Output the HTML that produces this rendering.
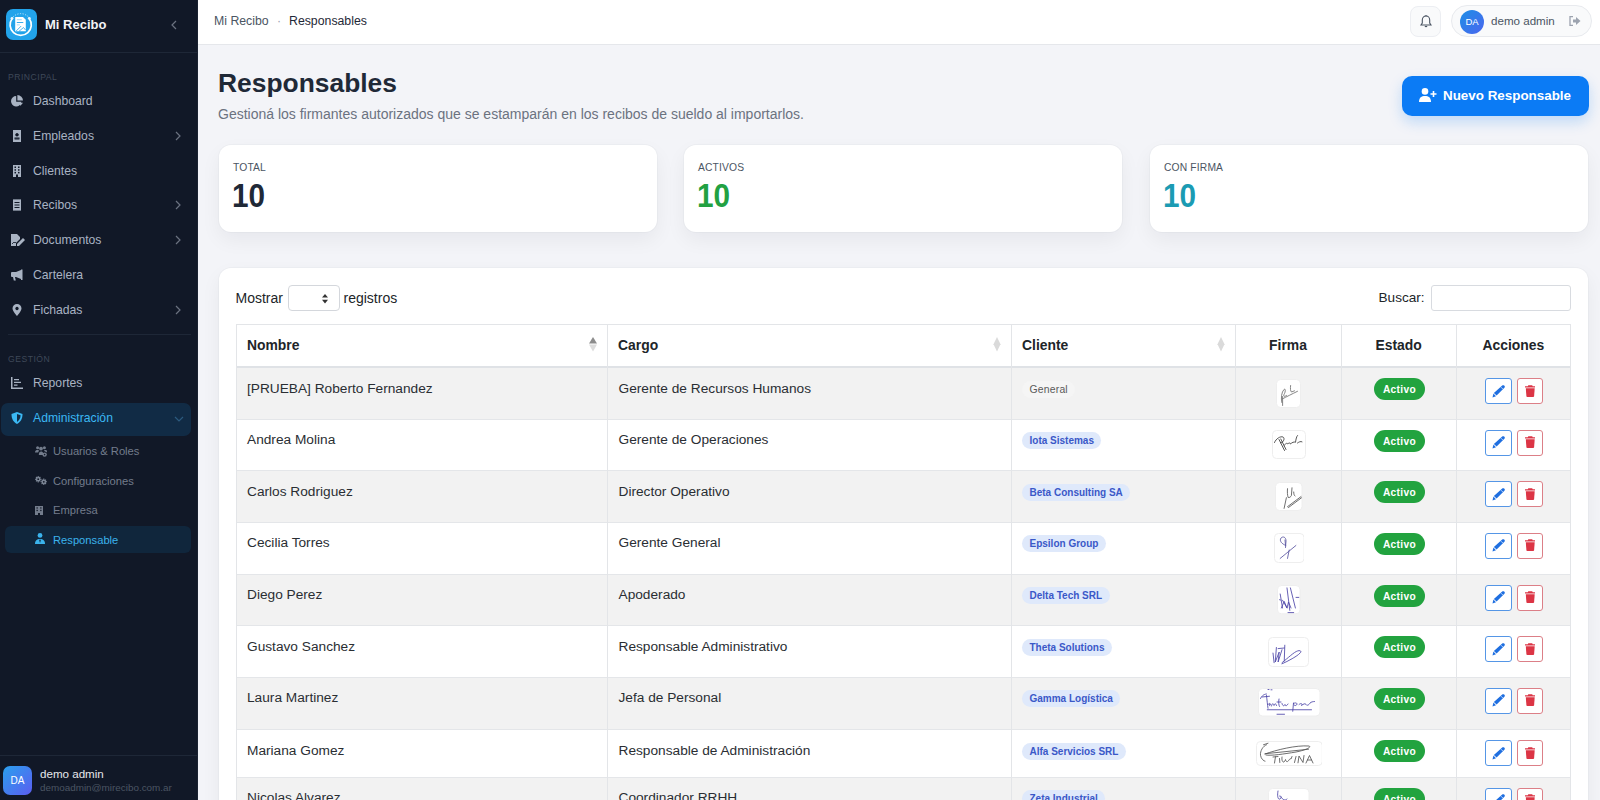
<!DOCTYPE html>
<html><head><meta charset="utf-8">
<style>
*{box-sizing:border-box;margin:0;padding:0}
html,body{width:1600px;height:800px;overflow:hidden;font-family:"Liberation Sans",sans-serif;background:#f3f4f8;color:#1f2937}
.abs{position:absolute}
#sb{position:absolute;left:0;top:0;width:198px;height:800px;background:#111827;border-right:1px solid #1a2231}
#sb .logo{position:absolute;left:6px;top:9px;width:31px;height:31px;border-radius:7px;background:#22a3ea}
#sb .brand{position:absolute;left:45px;top:17px;font-size:13px;font-weight:bold;color:#f3f4f6;line-height:16px}
#sb .collapse{position:absolute;left:171px;top:20px}
#sb .hdiv{position:absolute;left:0;top:52px;width:197px;height:1px;background:#1e2737}
.sec{position:absolute;left:8px;font-size:8.6px;font-weight:normal;letter-spacing:0.5px;color:#3f4859;line-height:10px}
.mi{position:absolute;left:0;width:197px;height:34px;color:#a9b3c3;font-size:12.2px}
.mi svg.ic{position:absolute;left:11px;top:11px;width:12px;height:12px;fill:#a9b3c3}
.mi .tx{position:absolute;left:33px;top:10px;line-height:14px;white-space:nowrap}
.mi svg.chev{position:absolute;left:175px;top:12px;width:6px;height:10px}
.sub{position:absolute;left:0;width:197px;height:28px;color:#737c8c;font-size:11.2px}
.sub svg.ic{position:absolute;left:34px;top:8px;width:13px;height:12px;fill:#737c8c}
.sub .tx{position:absolute;left:53px;top:7px;line-height:14px;white-space:nowrap}
#hdr{position:absolute;left:198px;top:0;width:1402px;height:45px;background:#fff;border-bottom:1px solid #e5e7eb}

.bc{position:absolute;top:14px;font-size:12.3px;color:#4b5563;line-height:14px;white-space:nowrap}
.ttl{position:absolute;left:218px;top:68px;font-size:26.4px;font-weight:bold;color:#1f2937;line-height:30px;white-space:nowrap}
.stt{position:absolute;left:218px;top:105.5px;font-size:14px;color:#6b7280;line-height:17px;white-space:nowrap}
.btn-new{position:absolute;left:1402px;top:76px;width:187px;height:40px;border-radius:10px;background:#0b7bf5;box-shadow:0 6px 14px rgba(11,123,245,.22);color:#fff;font-weight:bold;font-size:13.4px}
.card{position:absolute;top:145px;width:438px;height:87px;background:#fff;border-radius:12px;box-shadow:0 0 0 1px rgba(17,24,39,.025),0 8px 20px rgba(17,24,39,.055)}
.card .lb{position:absolute;left:14px;top:16.5px;font-size:10.3px;letter-spacing:0.15px;color:#4b5563;line-height:11px}
.card .num{position:absolute;left:13px;top:32px;font-size:33px;font-weight:bold;line-height:37px;transform:scaleX(0.9);transform-origin:0 0}
#tc{position:absolute;left:219px;top:268px;width:1369px;height:560px;background:#fff;border-radius:12px;box-shadow:0 0 0 1px rgba(17,24,39,.025),0 8px 20px rgba(17,24,39,.055)}

.tb{position:absolute}
.th{position:absolute;font-size:13.9px;font-weight:bold;color:#212529;line-height:16px;white-space:nowrap}
.td{position:absolute;font-size:13.7px;color:#2a2e33;line-height:16px;white-space:nowrap}
.badge{position:absolute;height:17px;padding:0 7.5px;border-radius:9px;background:#dfe9fb;color:#3a58c8;font-size:10px;font-weight:bold;line-height:17px;white-space:nowrap}
.badge.gen{background:#f5f5f5;color:#5a5a5a;font-weight:normal;font-size:10.4px;-webkit-text-stroke:0;letter-spacing:0.2px}
.sig{position:absolute}
.act{position:absolute;width:51px;height:22px;border-radius:11px;background:#22a33f;color:#fff;font-size:10.2px;font-weight:bold;letter-spacing:0.35px;line-height:23px;text-align:center}
.be{position:absolute;width:27px;height:26px;border:1px solid #5596e6;border-radius:3px;background:#fff}
.bd{position:absolute;width:25.5px;height:26px;border:1px solid #dc7f87;border-radius:3px;background:#fff}
.lbl{position:absolute;font-size:14px;color:#212529;line-height:16px;white-space:nowrap}
</style></head><body>
<div id="sb">
  <div class="logo">
    <svg width="31" height="31" viewBox="0 0 31 31">
      <path d="M6.2 9.5 A10.6 10.6 0 1 0 23.2 9.5" fill="none" stroke="#fff" stroke-width="1.7"/>
      <path d="M7 8 A10.6 10.6 0 0 1 22.5 8" fill="none" stroke="#d8f1ff" stroke-width="0.8" stroke-dasharray="1.2 1.4"/>
      <circle cx="6" cy="9.3" r="1.4" fill="#e6f6ff"/><circle cx="23.3" cy="9.3" r="1.4" fill="#e6f6ff"/>
      <path d="M9.2 8 H17 L19.8 10.8 V22.3 H9.2 Z" fill="#fff"/>
      <rect x="10.8" y="10.3" width="5" height="0.9" fill="#8fd3f6"/><rect x="10.8" y="13" width="6.5" height="0.9" fill="#22a3ea"/><rect x="10.8" y="15.5" width="3" height="0.8" fill="#8fd3f6"/>
      <path d="M10.2 22 L15.2 17 M13 22.3 L17.5 18.5 L19.5 21" fill="none" stroke="#22a3ea" stroke-width="0.8"/>
    </svg>
  </div>
  <div class="brand">Mi Recibo</div>
  <svg class="collapse" width="6" height="10" viewBox="0 0 6 10"><path d="M5 1 L1 5 L5 9" fill="none" stroke="#6b7280" stroke-width="1.2"/></svg>
  <div class="hdiv"></div>
  <div class="sec" style="top:72px">PRINCIPAL</div>
  <div class="mi" style="top:84px"><svg class="ic" viewBox="0 0 12 12"><path d="M5.2 1 A5.2 5.2 0 1 0 10.4 6.8 L5.2 6.8 Z"/><path d="M6.4 0 A5.6 5.6 0 0 1 12 5.6 L6.4 5.6 Z"/><path d="M7 7.8 L12 7.8 L9.5 10.8 Z"/></svg><span class="tx">Dashboard</span></div>
  <div class="mi" style="top:119px"><svg class="ic" viewBox="0 0 12 12"><path d="M2 0 H10 V12 H2 Z M6 3.2 A1.6 1.6 0 1 0 6.01 3.2 Z M3.6 8.6 H8.4 V9.6 H3.6 Z" fill-rule="evenodd"/><circle cx="6" cy="4.8" r="1.5" fill="#111827"/><rect x="3.5" y="7.5" width="5" height="1.2" fill="#111827"/></svg><span class="tx">Empleados</span><svg class="chev" viewBox="0 0 6 10"><path d="M1 1 L5 5 L1 9" fill="none" stroke="#6b7280" stroke-width="1.2"/></svg></div>
  <div class="mi" style="top:153.5px"><svg class="ic" viewBox="0 0 12 12"><path d="M2 0 H10 V12 H7 V9.5 H5 V12 H2 Z"/><g fill="#111827"><rect x="3.5" y="1.5" width="1.5" height="1.5"/><rect x="7" y="1.5" width="1.5" height="1.5"/><rect x="3.5" y="4.2" width="1.5" height="1.5"/><rect x="7" y="4.2" width="1.5" height="1.5"/><rect x="3.5" y="6.9" width="1.5" height="1.5"/><rect x="7" y="6.9" width="1.5" height="1.5"/></g></svg><span class="tx">Clientes</span></div>
  <div class="mi" style="top:188px"><svg class="ic" viewBox="0 0 12 12"><path d="M2 0 L3 0.8 L4 0 L5 0.8 L6 0 L7 0.8 L8 0 L9 0.8 L10 0 V12 L9 11.2 L8 12 L7 11.2 L6 12 L5 11.2 L4 12 L3 11.2 L2 12 Z"/><g fill="#111827"><rect x="3.5" y="3" width="5" height="1"/><rect x="3.5" y="5.5" width="5" height="1"/><rect x="3.5" y="8" width="5" height="1"/></g></svg><span class="tx">Recibos</span><svg class="chev" viewBox="0 0 6 10"><path d="M1 1 L5 5 L1 9" fill="none" stroke="#6b7280" stroke-width="1.2"/></svg></div>
  <div class="mi" style="top:223px"><svg class="ic" viewBox="0 0 14 12" style="width:14px"><path d="M0 0 H6 L9 3 V5 L5 9 V12 H0 Z"/><path d="M6 10 L12 4 L14 6 L8 12 H6 Z"/><path d="M1 10 L3 8 L4 9 L5 8" fill="none" stroke="#111827" stroke-width="0.8"/></svg><span class="tx">Documentos</span><svg class="chev" viewBox="0 0 6 10"><path d="M1 1 L5 5 L1 9" fill="none" stroke="#6b7280" stroke-width="1.2"/></svg></div>
  <div class="mi" style="top:257.5px"><svg class="ic" viewBox="0 0 12 12"><path d="M10 0.5 L11.5 0.5 L11.5 11 L10 11 L10 10 L5 8 H4 L4.8 11.5 H2.8 L2 8 H1 A1 1 0 0 1 0 7 V4 A1 1 0 0 1 1 3 H5 L10 1 Z"/></svg><span class="tx">Cartelera</span></div>
  <div class="mi" style="top:292.5px"><svg class="ic" viewBox="0 0 12 12"><path d="M6 0 A4.5 4.5 0 0 1 10.5 4.5 C10.5 7 6 12 6 12 C6 12 1.5 7 1.5 4.5 A4.5 4.5 0 0 1 6 0 Z M6 2.8 A1.7 1.7 0 1 0 6.01 2.8 Z" fill-rule="evenodd"/></svg><span class="tx">Fichadas</span><svg class="chev" viewBox="0 0 6 10"><path d="M1 1 L5 5 L1 9" fill="none" stroke="#6b7280" stroke-width="1.2"/></svg></div>
  <div style="position:absolute;left:8px;top:334px;width:183px;height:1px;background:#1e2737"></div>
  <div class="sec" style="top:354px">GESTIÓN</div>
  <div class="mi" style="top:366px"><svg class="ic" viewBox="0 0 12 12"><path d="M0 0 H1.5 V10.5 H12 V12 H0 Z M3 2 H8 V3.3 H3 Z M3 4.8 H10 V6.1 H3 Z M3 7.5 H6.5 V8.8 H3 Z"/></svg><span class="tx">Reportes</span></div>
  <div style="position:absolute;left:1px;top:402.5px;width:190px;height:33px;border-radius:7px;background:#112b45"></div>
  <div class="mi" style="top:401px;color:#3bb8f3"><svg class="ic" viewBox="0 0 12 12" style="fill:#3bb8f3"><path d="M6 0 L11.5 2 C11.5 7 9.5 10 6 12 C2.5 10 0.5 7 0.5 2 Z M6 2 V10 C8 8.6 9.5 6.5 9.6 3.3 Z" fill-rule="evenodd"/></svg><span class="tx">Administración</span><svg class="chev" viewBox="0 0 10 6" style="width:10px;height:6px;left:174px;top:15px"><path d="M1 1 L5 5 L9 1" fill="none" stroke="#2c5a7e" stroke-width="1.2"/></svg></div>
  <div class="sub" style="top:437px"><svg class="ic" viewBox="0 0 12 11" style="left:35px;top:9px;width:12px;height:11px"><circle cx="2.6" cy="1.8" r="1.5"/><circle cx="9.4" cy="1.8" r="1.5"/><circle cx="6" cy="2.6" r="1.9"/><path d="M0 6.5 C0 4.5 1.2 4 2.6 4 C3.5 4 4 4.3 4.3 4.8 C3.5 5.5 3.2 6 3.2 6.5 Z M8.8 4.8 C9 4.3 9.6 4 10.4 4 C11.8 4 12 4.5 12 6.5 Z M3.8 9 C3.8 6.5 4.8 5.5 6 5.5 C7 5.5 7.6 6 8 6.6 V9 Z"/><circle cx="9.6" cy="8.6" r="2.2"/><circle cx="9.6" cy="8.6" r="0.8" fill="#111827"/></svg><span class="tx">Usuarios &amp; Roles</span></div>
  <div class="sub" style="top:467px"><svg class="ic" viewBox="0 0 12 9" style="left:35px;top:9px;width:12px;height:9px"><g><circle cx="3.2" cy="3.2" r="2.3"/><g stroke="#7d8797" stroke-width="1.1"><path d="M3.2 0 V6.4 M0 3.2 H6.4 M1 1 L5.4 5.4 M5.4 1 L1 5.4"/></g><circle cx="3.2" cy="3.2" r="0.9" fill="#111827"/></g><g><circle cx="8.8" cy="5.8" r="2.3"/><g stroke="#7d8797" stroke-width="1.1"><path d="M8.8 2.6 V9 M5.6 5.8 H12 M6.6 3.6 L11 8 M11 3.6 L6.6 8"/></g><circle cx="8.8" cy="5.8" r="0.9" fill="#111827"/></g></svg><span class="tx">Configuraciones</span></div>
  <div class="sub" style="top:496px"><svg class="ic" viewBox="0 0 8 9" style="left:35px;top:9.5px;width:8px;height:9px"><path d="M0 0 H8 V9 H5 V7 H3 V9 H0 Z"/><g fill="#111827"><rect x="1.5" y="1.3" width="1.3" height="1.3"/><rect x="5.2" y="1.3" width="1.3" height="1.3"/><rect x="1.5" y="3.8" width="1.3" height="1.3"/><rect x="5.2" y="3.8" width="1.3" height="1.3"/></g></svg><span class="tx">Empresa</span></div>
  <div style="position:absolute;left:5px;top:525.5px;width:186px;height:27px;border-radius:6px;background:#10263c"></div>
  <div class="sub" style="top:525.5px;color:#3bb3ec"><svg class="ic" viewBox="0 0 10 11" style="fill:#3bb3ec;left:34.5px;top:7.5px;width:10px;height:11px"><circle cx="5" cy="2.4" r="2.4"/><path d="M0 11 C0 7.5 1.8 6 5 6 C8.2 6 10 7.5 10 11 Z"/><path d="M5 6.3 L4.2 7.3 L5 10 L5.8 7.3 Z" fill="#10263c"/></svg><span class="tx">Responsable</span></div>
  <div style="position:absolute;left:0;top:755px;width:197px;height:1px;background:#1e2737"></div>
  <div style="position:absolute;left:3px;top:766px;width:29px;height:29px;border-radius:7px;background:linear-gradient(135deg,#2aa0ee,#5b5df0);color:#fff;font-size:10px;text-align:center;line-height:29px">DA</div>
  <div style="position:absolute;left:40px;top:768px;font-size:11.6px;color:#e5e7eb;line-height:12px">demo admin</div>
  <div style="position:absolute;left:40px;top:782px;font-size:9.9px;color:#4b5563;line-height:11px">demoadmin@mirecibo.com.ar</div>
</div>
<div id="hdr"></div>

<div class="bc" style="left:214px">Mi Recibo</div>
<div class="bc" style="left:277px;color:#9ca3af">·</div>
<div class="bc" style="left:289px;color:#1f2937">Responsables</div>
<div style="position:absolute;left:1410px;top:6px;width:31px;height:31px;border-radius:8px;background:#f9fafb;border:1px solid #eceef2">
  <svg width="12" height="13" viewBox="0 0 12 13" style="position:absolute;left:9px;top:8px"><path d="M6 1 C3.5 1 2.3 3 2.3 5 V8 L1 10 H11 L9.7 8 V5 C9.7 3 8.5 1 6 1 Z" fill="none" stroke="#4b5563" stroke-width="1.1"/><path d="M4.8 11.5 H7.2" stroke="#4b5563" stroke-width="1.2"/><circle cx="6" cy="0.8" r="0.7" fill="#4b5563"/></svg>
</div>
<div style="position:absolute;left:1451px;top:5px;width:141px;height:32px;border-radius:16px;background:#f9fafb;border:1px solid #e8eaee">
  <div style="position:absolute;left:8px;top:3.5px;width:24px;height:24px;border-radius:50%;background:linear-gradient(135deg,#1d8fe6,#4b66ef);color:#fff;font-size:9.5px;line-height:24px;text-align:center">DA</div>
  <div style="position:absolute;left:39px;top:8px;font-size:11.6px;color:#4b5563;line-height:14px">demo admin</div>
  <svg width="12" height="10" viewBox="0 0 12 10" style="position:absolute;left:117px;top:10px"><path d="M4 0.5 H1 V9.5 H4" fill="none" stroke="#9ca3af" stroke-width="1.3"/><path d="M4 3.5 H7 V1 L11.5 5 L7 9 V6.5 H4 Z" fill="#9ca3af"/></svg>
</div>
<div class="ttl">Responsables</div>
<div class="stt">Gestioná los firmantes autorizados que se estamparán en los recibos de sueldo al importarlos.</div>
<div class="btn-new">
  <svg width="18" height="14" viewBox="0 0 18 14" style="position:absolute;left:17px;top:12px"><circle cx="6" cy="3.4" r="3.3" fill="#fff"/><path d="M0 14 C0 9.5 2.5 8 6 8 C9.5 8 12 9.5 12 14 Z" fill="#fff"/><path d="M14.5 3 V9 M11.5 6 H17.5" stroke="#fff" stroke-width="1.6"/></svg>
  <span style="position:absolute;left:41px;top:12px;line-height:16px">Nuevo Responsable</span>
</div>
<div class="card" style="left:219px"><div class="lb">TOTAL</div><div class="num" style="color:#1f2937">10</div></div>
<div class="card" style="left:684px"><div class="lb">ACTIVOS</div><div class="num" style="color:#22a142">10</div></div>
<div class="card" style="left:1150px"><div class="lb">CON FIRMA</div><div class="num" style="color:#1b9bb3">10</div></div>
<div id="tc"></div>
<div class="lbl" style="left:235.5px;top:290px">Mostrar</div>
<div style="position:absolute;left:288px;top:285px;width:52px;height:26px;border:1px solid #d4d7dc;border-radius:4px;background:#fff">
<svg width="6" height="10" viewBox="0 0 6 10" style="position:absolute;left:33px;top:7.5px"><path d="M3 0 L6 3.6 H0 Z M0 5.8 H6 L3 9.4 Z" fill="#333"/></svg></div>
<div class="lbl" style="left:343.5px;top:290px">registros</div>
<div class="lbl" style="left:1378.5px;top:290px;font-size:13.6px">Buscar:</div>
<div style="position:absolute;left:1430.5px;top:285px;width:140px;height:26px;border:1px solid #d8dbe0;border-radius:3px;background:#fff"></div>
<!--T--><div class="tb" style="left:236.5px;top:323.5px;width:1334.0px;height:1px;background:#e3e5e8"></div>
<div class="tb" style="left:236.5px;top:324.5px;width:1334.0px;height:41px;background:#fff"></div>
<div class="tb" style="left:236.5px;top:365.5px;width:1334.0px;height:2px;background:#dfe2e6"></div>
<div class="th" style="left:247.0px;top:337px">Nombre</div>
<svg class="tb" width="8" height="15" viewBox="0 0 8 15" style="left:589.0px;top:337px"><path d="M4 0 L8 6.6 H0 Z" fill="#8c8c8c"/><path d="M0 7.6 H8 L4 14.5 Z" fill="#dcdcdc"/></svg>
<div class="th" style="left:618.0px;top:337px">Cargo</div>
<svg class="tb" width="8" height="15" viewBox="0 0 8 15" style="left:993.0px;top:337px"><path d="M4 0 L7.5 7.25 L4 14.5 L0.5 7.25 Z" fill="#dadada"/></svg>
<div class="th" style="left:1022.0px;top:337px">Cliente</div>
<svg class="tb" width="8" height="15" viewBox="0 0 8 15" style="left:1216.5px;top:337px"><path d="M4 0 L7.5 7.25 L4 14.5 L0.5 7.25 Z" fill="#dadada"/></svg>
<div class="th" style="left:1235px;width:106px;text-align:center;top:337px">Firma</div>
<div class="th" style="left:1341px;width:115.25px;text-align:center;top:337px">Estado</div>
<div class="th" style="left:1456.25px;width:114.25px;text-align:center;top:337px">Acciones</div>
<div class="tb" style="left:236.5px;top:367.5px;width:1334.0px;height:51.5px;background:#f2f2f2"></div>
<div class="td" style="left:247.0px;top:380.5px">[PRUEBA] Roberto Fernandez</div>
<div class="td" style="left:618.5px;top:380.5px">Gerente de Recursos Humanos</div>
<div class="badge gen" style="left:1022.0px;top:380.5px">General</div>
<svg class="sig" width="25" height="29" viewBox="0 0 25 29" style="left:1276.4px;top:378.8px"><rect x="0.5" y="0.5" width="24" height="28" rx="4" fill="#fff" stroke="#eeeeee"/><g fill="none" stroke="#6f6f6f" stroke-width="0.85" stroke-linecap="round" stroke-linejoin="round"><path d="M5.8 23.5 C4.8 19 5.5 13 8 10.5 C9.8 9 9.6 13 8 15.5 C7 17.5 8.6 18 10.5 16.5 M6.6 17.5 L6.6 26.5 M6.2 20 C11 17.5 16 15 21.5 12.3 M14.6 6.5 C14.2 9.5 14.4 12 15.5 13 L18.5 11.8"/></g></svg>
<div class="act" style="left:1374.025px;top:378.0px">Activo</div>
<div class="be" style="left:1485px;top:378.0px"><svg width="13" height="13" viewBox="0 0 13 13" style="position:absolute;left:5.5px;top:5.5px"><path d="M10.2 0.6 C10.8 0 11.6 0 12.2 0.6 L12.4 0.8 C13 1.4 13 2.2 12.4 2.8 L4.6 10.6 L1.9 8 Z" fill="#1f6fe0"/><path d="M1.4 8.6 L4 11.2 L0.5 12.5 Z" fill="#1f6fe0"/><path d="M9 2.2 L10.8 4" stroke="#fff" stroke-width="0.7"/></svg></div>
<div class="bd" style="left:1517px;top:378.0px"><svg width="10.5" height="12" viewBox="0 0 10.5 12" style="position:absolute;left:6.5px;top:5.8px"><path d="M3.3 0.2 H7.2 L7.7 1.2 H10.5 V2.6 H0 V1.2 H2.8 Z" fill="#dc3545"/><path d="M0.8 3.3 H9.7 L9.1 11.2 Q9 12 8.2 12 H2.3 Q1.5 12 1.4 11.2 Z" fill="#dc3545"/></svg></div>
<div class="tb" style="left:236.5px;top:419px;width:1334.0px;height:51.5px;background:#fff"></div>
<div class="tb" style="left:236.5px;top:418.5px;width:1334.0px;height:1px;background:#e4e6e9"></div>
<div class="td" style="left:247.0px;top:432px">Andrea Molina</div>
<div class="td" style="left:618.5px;top:432px">Gerente de Operaciones</div>
<div class="badge" style="left:1022.0px;top:432px">Iota Sistemas</div>
<svg class="sig" width="34" height="29" viewBox="0 0 34 29" style="left:1271.9px;top:430.3px"><rect x="0.5" y="0.5" width="33" height="28" rx="4" fill="#fff" stroke="#eeeeee"/><g fill="none" stroke="#3a3a3a" stroke-width="0.85" stroke-linecap="round" stroke-linejoin="round"><path d="M2.5 12.5 C4 8.5 8.5 6 11 7 C13 8 12 12.5 8.5 12.8 M7 9.5 L12.5 20.5 M8.8 9 L14 19.5 M12 15.5 C14 13.5 15 12.5 15.8 14 C17 12.5 18.5 12.8 18.5 14 C20 12.5 22 11.5 23.5 12.3 C24 9 24.5 6.5 25.5 5.5 M25.5 13 C27 12 28.5 11 30 11.8"/></g></svg>
<div class="act" style="left:1374.025px;top:429.5px">Activo</div>
<div class="be" style="left:1485px;top:429.5px"><svg width="13" height="13" viewBox="0 0 13 13" style="position:absolute;left:5.5px;top:5.5px"><path d="M10.2 0.6 C10.8 0 11.6 0 12.2 0.6 L12.4 0.8 C13 1.4 13 2.2 12.4 2.8 L4.6 10.6 L1.9 8 Z" fill="#1f6fe0"/><path d="M1.4 8.6 L4 11.2 L0.5 12.5 Z" fill="#1f6fe0"/><path d="M9 2.2 L10.8 4" stroke="#fff" stroke-width="0.7"/></svg></div>
<div class="bd" style="left:1517px;top:429.5px"><svg width="10.5" height="12" viewBox="0 0 10.5 12" style="position:absolute;left:6.5px;top:5.8px"><path d="M3.3 0.2 H7.2 L7.7 1.2 H10.5 V2.6 H0 V1.2 H2.8 Z" fill="#dc3545"/><path d="M0.8 3.3 H9.7 L9.1 11.2 Q9 12 8.2 12 H2.3 Q1.5 12 1.4 11.2 Z" fill="#dc3545"/></svg></div>
<div class="tb" style="left:236.5px;top:470.5px;width:1334.0px;height:51.5px;background:#f2f2f2"></div>
<div class="tb" style="left:236.5px;top:470.0px;width:1334.0px;height:1px;background:#e4e6e9"></div>
<div class="td" style="left:247.0px;top:483.5px">Carlos Rodriguez</div>
<div class="td" style="left:618.5px;top:483.5px">Director Operativo</div>
<div class="badge" style="left:1022.0px;top:483.5px">Beta Consulting SA</div>
<svg class="sig" width="27.5" height="29" viewBox="0 0 27.5 29" style="left:1275.15px;top:481.8px"><rect x="0.5" y="0.5" width="26.5" height="28" rx="4" fill="#fff" stroke="#eeeeee"/><g fill="none" stroke="#555" stroke-width="0.85" stroke-linecap="round" stroke-linejoin="round"><path d="M12.5 6.7 C12.2 10 12.4 13.5 13.2 15.5 C14.5 16 16 14.5 16.4 13.5 L17 5.8 M18.7 10 C18.8 12 19 13.5 20 14 M11.4 15.7 L9.1 26.4 M12.5 24.7 L26 14.6 M13.5 25.5 L26.5 15.8"/></g></svg>
<div class="act" style="left:1374.025px;top:481.0px">Activo</div>
<div class="be" style="left:1485px;top:481.0px"><svg width="13" height="13" viewBox="0 0 13 13" style="position:absolute;left:5.5px;top:5.5px"><path d="M10.2 0.6 C10.8 0 11.6 0 12.2 0.6 L12.4 0.8 C13 1.4 13 2.2 12.4 2.8 L4.6 10.6 L1.9 8 Z" fill="#1f6fe0"/><path d="M1.4 8.6 L4 11.2 L0.5 12.5 Z" fill="#1f6fe0"/><path d="M9 2.2 L10.8 4" stroke="#fff" stroke-width="0.7"/></svg></div>
<div class="bd" style="left:1517px;top:481.0px"><svg width="10.5" height="12" viewBox="0 0 10.5 12" style="position:absolute;left:6.5px;top:5.8px"><path d="M3.3 0.2 H7.2 L7.7 1.2 H10.5 V2.6 H0 V1.2 H2.8 Z" fill="#dc3545"/><path d="M0.8 3.3 H9.7 L9.1 11.2 Q9 12 8.2 12 H2.3 Q1.5 12 1.4 11.2 Z" fill="#dc3545"/></svg></div>
<div class="tb" style="left:236.5px;top:522px;width:1334.0px;height:52px;background:#fff"></div>
<div class="tb" style="left:236.5px;top:521.5px;width:1334.0px;height:1px;background:#e4e6e9"></div>
<div class="td" style="left:247.0px;top:535px">Cecilia Torres</div>
<div class="td" style="left:618.5px;top:535px">Gerente General</div>
<div class="badge" style="left:1022.0px;top:535px">Epsilon Group</div>
<svg class="sig" width="30.5" height="30" viewBox="0 0 30.5 30" style="left:1273.65px;top:533.3px"><rect x="0.5" y="0.5" width="29.5" height="29" rx="4" fill="#fff" stroke="#eeeeee"/><g fill="none" stroke="#5a55a0" stroke-width="0.85" stroke-linecap="round" stroke-linejoin="round"><path d="M11.8 12.5 C8 11 5 8 7 5 C9 3 12 4 12 8 L11.5 14.5 M11 7 L11.5 12 M6.2 25.4 L21.9 12.5 M15.2 17 L13.5 25.4"/></g></svg>
<div class="act" style="left:1374.025px;top:532.5px">Activo</div>
<div class="be" style="left:1485px;top:532.5px"><svg width="13" height="13" viewBox="0 0 13 13" style="position:absolute;left:5.5px;top:5.5px"><path d="M10.2 0.6 C10.8 0 11.6 0 12.2 0.6 L12.4 0.8 C13 1.4 13 2.2 12.4 2.8 L4.6 10.6 L1.9 8 Z" fill="#1f6fe0"/><path d="M1.4 8.6 L4 11.2 L0.5 12.5 Z" fill="#1f6fe0"/><path d="M9 2.2 L10.8 4" stroke="#fff" stroke-width="0.7"/></svg></div>
<div class="bd" style="left:1517px;top:532.5px"><svg width="10.5" height="12" viewBox="0 0 10.5 12" style="position:absolute;left:6.5px;top:5.8px"><path d="M3.3 0.2 H7.2 L7.7 1.2 H10.5 V2.6 H0 V1.2 H2.8 Z" fill="#dc3545"/><path d="M0.8 3.3 H9.7 L9.1 11.2 Q9 12 8.2 12 H2.3 Q1.5 12 1.4 11.2 Z" fill="#dc3545"/></svg></div>
<div class="tb" style="left:236.5px;top:574px;width:1334.0px;height:51.5px;background:#f2f2f2"></div>
<div class="tb" style="left:236.5px;top:573.5px;width:1334.0px;height:1px;background:#e4e6e9"></div>
<div class="td" style="left:247.0px;top:587px">Diego Perez</div>
<div class="td" style="left:618.5px;top:587px">Apoderado</div>
<div class="badge" style="left:1022.0px;top:587px">Delta Tech SRL</div>
<svg class="sig" width="23.5" height="29.3" viewBox="0 0 23.5 29.3" style="left:1277.15px;top:585.3px"><rect x="0.5" y="0.5" width="22.5" height="28.3" rx="4" fill="#fff" stroke="#eeeeee"/><g fill="none" stroke="#4b45a8" stroke-width="0.85" stroke-linecap="round" stroke-linejoin="round"><path d="M3.2 9 L5.5 23 M10 2.9 L12.8 25.4 M13.4 2.9 L18.4 23 M4.4 23 L7.2 16.4 L10 23 L11.5 17 L14 23 M5.5 15.2 L10 23 M11 27.6 L16.7 27.6 M19 12.4 L21.8 12.4 M2.5 14.7 L3.5 15"/></g></svg>
<div class="act" style="left:1374.025px;top:584.5px">Activo</div>
<div class="be" style="left:1485px;top:584.5px"><svg width="13" height="13" viewBox="0 0 13 13" style="position:absolute;left:5.5px;top:5.5px"><path d="M10.2 0.6 C10.8 0 11.6 0 12.2 0.6 L12.4 0.8 C13 1.4 13 2.2 12.4 2.8 L4.6 10.6 L1.9 8 Z" fill="#1f6fe0"/><path d="M1.4 8.6 L4 11.2 L0.5 12.5 Z" fill="#1f6fe0"/><path d="M9 2.2 L10.8 4" stroke="#fff" stroke-width="0.7"/></svg></div>
<div class="bd" style="left:1517px;top:584.5px"><svg width="10.5" height="12" viewBox="0 0 10.5 12" style="position:absolute;left:6.5px;top:5.8px"><path d="M3.3 0.2 H7.2 L7.7 1.2 H10.5 V2.6 H0 V1.2 H2.8 Z" fill="#dc3545"/><path d="M0.8 3.3 H9.7 L9.1 11.2 Q9 12 8.2 12 H2.3 Q1.5 12 1.4 11.2 Z" fill="#dc3545"/></svg></div>
<div class="tb" style="left:236.5px;top:625.5px;width:1334.0px;height:51.5px;background:#fff"></div>
<div class="tb" style="left:236.5px;top:625.0px;width:1334.0px;height:1px;background:#e4e6e9"></div>
<div class="td" style="left:247.0px;top:638.5px">Gustavo Sanchez</div>
<div class="td" style="left:618.5px;top:638.5px">Responsable Administrativo</div>
<div class="badge" style="left:1022.0px;top:638.5px">Theta Solutions</div>
<svg class="sig" width="41" height="30" viewBox="0 0 41 30" style="left:1268.4px;top:636.8px"><rect x="0.5" y="0.5" width="40" height="29" rx="4" fill="#fff" stroke="#eeeeee"/><g fill="none" stroke="#4b45a8" stroke-width="0.85" stroke-linecap="round" stroke-linejoin="round"><path d="M5 16.1 L6.1 25.7 M8.4 10.5 L7.25 25 L11.2 15 L10.1 25 L14 12.7 M16.8 8.2 L16.25 24 M10.1 11.6 L16.25 11 M14 25.7 C20 21 26 15 29.7 13.9 C32.5 13 33.5 14.5 32.6 15.5 C30 18.5 26 20.5 24.1 21.7 C21 23.5 17 25.5 14 26.8"/></g></svg>
<div class="act" style="left:1374.025px;top:636.0px">Activo</div>
<div class="be" style="left:1485px;top:636.0px"><svg width="13" height="13" viewBox="0 0 13 13" style="position:absolute;left:5.5px;top:5.5px"><path d="M10.2 0.6 C10.8 0 11.6 0 12.2 0.6 L12.4 0.8 C13 1.4 13 2.2 12.4 2.8 L4.6 10.6 L1.9 8 Z" fill="#1f6fe0"/><path d="M1.4 8.6 L4 11.2 L0.5 12.5 Z" fill="#1f6fe0"/><path d="M9 2.2 L10.8 4" stroke="#fff" stroke-width="0.7"/></svg></div>
<div class="bd" style="left:1517px;top:636.0px"><svg width="10.5" height="12" viewBox="0 0 10.5 12" style="position:absolute;left:6.5px;top:5.8px"><path d="M3.3 0.2 H7.2 L7.7 1.2 H10.5 V2.6 H0 V1.2 H2.8 Z" fill="#dc3545"/><path d="M0.8 3.3 H9.7 L9.1 11.2 Q9 12 8.2 12 H2.3 Q1.5 12 1.4 11.2 Z" fill="#dc3545"/></svg></div>
<div class="tb" style="left:236.5px;top:677px;width:1334.0px;height:52.5px;background:#f2f2f2"></div>
<div class="tb" style="left:236.5px;top:676.5px;width:1334.0px;height:1px;background:#e4e6e9"></div>
<div class="td" style="left:247.0px;top:690px">Laura Martinez</div>
<div class="td" style="left:618.5px;top:690px">Jefa de Personal</div>
<div class="badge" style="left:1022.0px;top:690px">Gamma Logística</div>
<svg class="sig" width="62.5" height="28.5" viewBox="0 0 62.5 28.5" style="left:1257.65px;top:688.3px"><rect x="0.5" y="0.5" width="61.5" height="27.5" rx="4" fill="#fff" stroke="#eeeeee"/><g fill="none" stroke="#4b45a8" stroke-width="0.85" stroke-linecap="round" stroke-linejoin="round"><path d="M2.5 10.5 C4 7 7 6 8.5 6 M4 9 L11.5 8.25 M8.5 7.5 C9 12 9.5 17 10 20.25 M10 16.5 C11 15 12.5 15 12.5 16.5 C12 18 11 18 11.5 16.5 M13.5 18 C14 15 15.5 15 16 17.5 C16.5 15.5 18 15 18.5 17.5 M21 11 C20.5 14 20.5 17 21.5 18.5 M19 14 L23 14 M24 15.5 C24.5 18 26 18.5 27 16.5 C27.2 18 28.5 18.5 30 16 M35.5 15 L34.75 23.25 M35.5 15.5 C38 14 40 15.5 38.5 17 C37.5 18 36 17.5 36 17 M41 16.5 C43 14.5 45 16 43.5 17.5 C45.5 16 47 15 48 16.5 C49 18 51 17 52 15 C53 14 55 13.5 56.5 13.5 M9.25 21.75 L53.5 21.75 M10 1.5 L11 1.5 M13 1.8 L14 1.8 M19 26.25 L26.5 26.25"/></g></svg>
<div class="act" style="left:1374.025px;top:687.5px">Activo</div>
<div class="be" style="left:1485px;top:687.5px"><svg width="13" height="13" viewBox="0 0 13 13" style="position:absolute;left:5.5px;top:5.5px"><path d="M10.2 0.6 C10.8 0 11.6 0 12.2 0.6 L12.4 0.8 C13 1.4 13 2.2 12.4 2.8 L4.6 10.6 L1.9 8 Z" fill="#1f6fe0"/><path d="M1.4 8.6 L4 11.2 L0.5 12.5 Z" fill="#1f6fe0"/><path d="M9 2.2 L10.8 4" stroke="#fff" stroke-width="0.7"/></svg></div>
<div class="bd" style="left:1517px;top:687.5px"><svg width="10.5" height="12" viewBox="0 0 10.5 12" style="position:absolute;left:6.5px;top:5.8px"><path d="M3.3 0.2 H7.2 L7.7 1.2 H10.5 V2.6 H0 V1.2 H2.8 Z" fill="#dc3545"/><path d="M0.8 3.3 H9.7 L9.1 11.2 Q9 12 8.2 12 H2.3 Q1.5 12 1.4 11.2 Z" fill="#dc3545"/></svg></div>
<div class="tb" style="left:236.5px;top:729.5px;width:1334.0px;height:47.5px;background:#fff"></div>
<div class="tb" style="left:236.5px;top:729.0px;width:1334.0px;height:1px;background:#e4e6e9"></div>
<div class="td" style="left:247.0px;top:742.5px">Mariana Gomez</div>
<div class="td" style="left:618.5px;top:742.5px">Responsable de Administración</div>
<div class="badge" style="left:1022.0px;top:742.5px">Alfa Servicios SRL</div>
<svg class="sig" width="66.75" height="25" viewBox="0 0 66.75 25" style="left:1255.525px;top:740.8px"><rect x="0.5" y="0.5" width="65.75" height="24" rx="4" fill="#fff" stroke="#eeeeee"/><g fill="none" stroke="#555" stroke-width="0.85" stroke-linecap="round" stroke-linejoin="round"><path d="M10.5 3.75 C7 5 4 10 4.5 14.25 C5 18 8 20.25 9 20.25 M9 13 C20 9 40 4 53 5 C56 6 50 9 40 11 C28 13 15 15 10 14 M9 12.75 L52.5 8.25 M7.5 3.75 L12 2.25 M19.5 15.75 L18.5 22 M17 16 L22 15.5 M23.5 17.5 L23.8 21.5 M26 16 C25.5 19 26.5 21.5 28 21 C29 20 29.5 18.5 29.5 18.5 C30 21 31.5 21.5 33 19 C33.5 18 34.5 17.5 35 18 L36 15.5 M38.5 21.5 L40 15.5 M42 21.8 L43 15 L47 21.5 L48 14.5 M50 22 L53.5 14.5 L57 22 M51.5 19 L55.5 19"/></g></svg>
<div class="act" style="left:1374.025px;top:740.0px">Activo</div>
<div class="be" style="left:1485px;top:740.0px"><svg width="13" height="13" viewBox="0 0 13 13" style="position:absolute;left:5.5px;top:5.5px"><path d="M10.2 0.6 C10.8 0 11.6 0 12.2 0.6 L12.4 0.8 C13 1.4 13 2.2 12.4 2.8 L4.6 10.6 L1.9 8 Z" fill="#1f6fe0"/><path d="M1.4 8.6 L4 11.2 L0.5 12.5 Z" fill="#1f6fe0"/><path d="M9 2.2 L10.8 4" stroke="#fff" stroke-width="0.7"/></svg></div>
<div class="bd" style="left:1517px;top:740.0px"><svg width="10.5" height="12" viewBox="0 0 10.5 12" style="position:absolute;left:6.5px;top:5.8px"><path d="M3.3 0.2 H7.2 L7.7 1.2 H10.5 V2.6 H0 V1.2 H2.8 Z" fill="#dc3545"/><path d="M0.8 3.3 H9.7 L9.1 11.2 Q9 12 8.2 12 H2.3 Q1.5 12 1.4 11.2 Z" fill="#dc3545"/></svg></div>
<div class="tb" style="left:236.5px;top:777px;width:1334.0px;height:52px;background:#f2f2f2"></div>
<div class="tb" style="left:236.5px;top:776.5px;width:1334.0px;height:1px;background:#e4e6e9"></div>
<div class="td" style="left:247.0px;top:790px">Nicolas Alvarez</div>
<div class="td" style="left:618.5px;top:790px">Coordinador RRHH</div>
<div class="badge" style="left:1022.0px;top:790px">Zeta Industrial</div>
<svg class="sig" width="41.5" height="30" viewBox="0 0 41.5 30" style="left:1268.15px;top:788.3px"><rect x="0.5" y="0.5" width="40.5" height="29" rx="4" fill="#fff" stroke="#eeeeee"/><g fill="none" stroke="#4b45a8" stroke-width="0.85" stroke-linecap="round" stroke-linejoin="round"><path d="M10 3 C9 8 10 12 12 11 C14 10 13 7 11.5 8 M13 9 C15 12 17 13 19 11"/></g></svg>
<div class="act" style="left:1374.025px;top:787.5px">Activo</div>
<div class="be" style="left:1485px;top:787.5px"><svg width="13" height="13" viewBox="0 0 13 13" style="position:absolute;left:5.5px;top:5.5px"><path d="M10.2 0.6 C10.8 0 11.6 0 12.2 0.6 L12.4 0.8 C13 1.4 13 2.2 12.4 2.8 L4.6 10.6 L1.9 8 Z" fill="#1f6fe0"/><path d="M1.4 8.6 L4 11.2 L0.5 12.5 Z" fill="#1f6fe0"/><path d="M9 2.2 L10.8 4" stroke="#fff" stroke-width="0.7"/></svg></div>
<div class="bd" style="left:1517px;top:787.5px"><svg width="10.5" height="12" viewBox="0 0 10.5 12" style="position:absolute;left:6.5px;top:5.8px"><path d="M3.3 0.2 H7.2 L7.7 1.2 H10.5 V2.6 H0 V1.2 H2.8 Z" fill="#dc3545"/><path d="M0.8 3.3 H9.7 L9.1 11.2 Q9 12 8.2 12 H2.3 Q1.5 12 1.4 11.2 Z" fill="#dc3545"/></svg></div>
<div class="tb" style="left:607.0px;top:324px;width:1px;height:476px;background:#e3e5e8"></div>
<div class="tb" style="left:1011.0px;top:324px;width:1px;height:476px;background:#e3e5e8"></div>
<div class="tb" style="left:1234.5px;top:324px;width:1px;height:476px;background:#e3e5e8"></div>
<div class="tb" style="left:1340.5px;top:324px;width:1px;height:476px;background:#e3e5e8"></div>
<div class="tb" style="left:1455.75px;top:324px;width:1px;height:476px;background:#e3e5e8"></div>
<div class="tb" style="left:236.0px;top:324px;width:1px;height:476px;background:#e3e5e8"></div>
<div class="tb" style="left:1570.0px;top:324px;width:1px;height:476px;background:#e3e5e8"></div><!--/T-->
</body></html>
